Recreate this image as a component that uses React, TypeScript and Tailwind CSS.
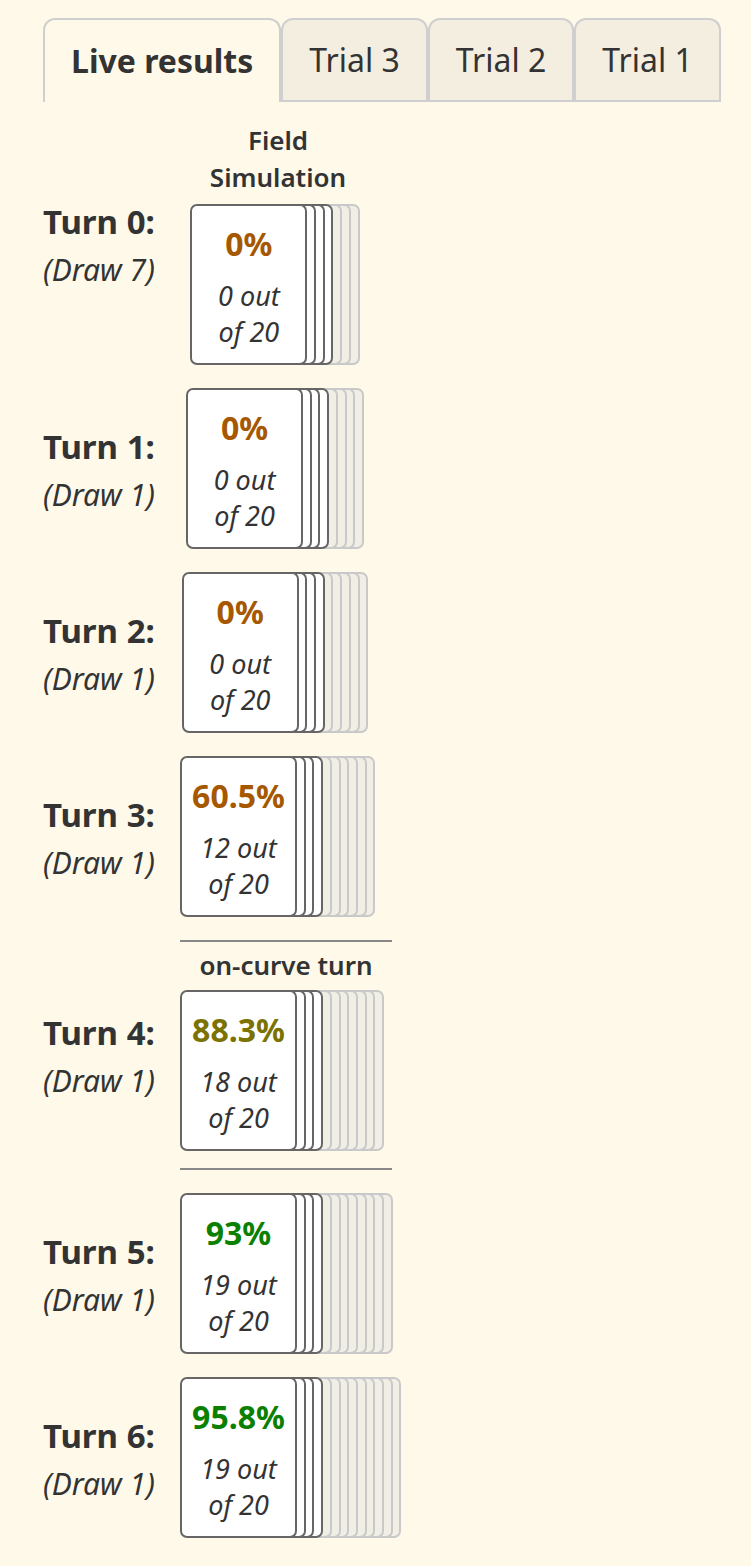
import React from "react";

type Row = {
  turn: number;
  draw: number;
  pct: string;
  hits: number;
  color: string;
  onCurve?: boolean;
};

const rows: Row[] = [
  { turn: 0, draw: 7, pct: "0%", hits: 0, color: "text-[#a65800]" },
  { turn: 1, draw: 1, pct: "0%", hits: 0, color: "text-[#a65800]" },
  { turn: 2, draw: 1, pct: "0%", hits: 0, color: "text-[#a65800]" },
  { turn: 3, draw: 1, pct: "60.5%", hits: 12, color: "text-[#a65800]" },
  { turn: 4, draw: 1, pct: "88.3%", hits: 18, color: "text-[#7b7200]", onCurve: true },
  { turn: 5, draw: 1, pct: "93%", hits: 19, color: "text-[#0b8000]" },
  { turn: 6, draw: 1, pct: "95.8%", hits: 19, color: "text-[#0b8000]" },
];

const CARD_W = 117;
const STEP = 8.7;
const DARK = 4;

function Stack({ row }: { row: Row }) {
  const count = 7 + row.turn;
  const width = CARD_W + (count - 1) * STEP;
  const ml = Math.max(0, (190 - width) / 2);
  const cards = Array.from({ length: count }, (_, i) => i);

  return (
    <div className="relative h-[161px]" style={{ width, marginLeft: ml }}>
      {cards.map((i) => (
        <div
          key={i}
          className={
            "absolute top-0 h-[161px] w-[117px] rounded-[7px] border-2 " +
            (i < DARK ? "border-[#666] bg-white" : "border-[#c9c9c9] bg-[#f1eee6]")
          }
          style={{ left: i * STEP, zIndex: count - i }}
        >
          {i === 0 && (
            <div className="flex flex-col items-center pt-[20px] text-center">
              <div className={"whitespace-nowrap text-[32px] font-bold leading-[36px] " + row.color}>
                {row.pct}
              </div>
              <div className="mt-[16px] text-[27px] italic leading-[36px] text-[#333]">
                {row.hits} out
                <br />
                of 20
              </div>
            </div>
          )}
        </div>
      ))}
    </div>
  );
}

function Label({ row }: { row: Row }) {
  return (
    <div className="w-[137px] shrink-0 whitespace-nowrap pt-[4px] text-[#333]">
      <div className="text-[33px] font-bold leading-[48px]">Turn {row.turn}:</div>
      <div className="text-[30px] italic leading-[48px]">(Draw {row.draw})</div>
    </div>
  );
}

export default function App() {
  const tabs = ["Trial 3", "Trial 2", "Trial 1"];

  return (
    <div
      className="min-h-[1566px] bg-[#fff9e9] pl-[43px] pt-[18px] text-[#333]"
      style={{ fontFamily: '"Noto Sans", "Open Sans", sans-serif' }}
    >
      <div className="flex h-[84px] items-stretch">
        <div className="flex items-center rounded-t-[12px] border-2 border-b-0 border-[#cfcfcf] bg-[#fff9e9] px-[26px] text-[32px] font-bold">
          Live results
        </div>
        {tabs.map((t) => (
          <div
            key={t}
            className="flex items-center rounded-t-[12px] border-2 border-[#cfcfcf] bg-[#f3eee0] px-[26px] text-[32px]"
          >
            {t}
          </div>
        ))}
      </div>

      <div className="flex flex-col gap-[23px] pt-[20px]">
        {rows.map((row) => (
          <div key={row.turn} className="flex items-center">
            <Label row={row} />
            <div className="w-[212px]">
              {row.turn === 0 && (
                <div className="mb-[8px] w-[196px] text-center text-[26px] font-semibold leading-[37px]">
                  Field
                  <br />
                  Simulation
                </div>
              )}
              {row.onCurve && (
                <>
                  <div className="h-[2px] bg-[#888]" />
                  <div className="mb-[10px] mt-[8px] text-center text-[26px] font-semibold leading-[30px]">
                    on-curve turn
                  </div>
                </>
              )}
              <Stack row={row} />
              {row.onCurve && <div className="mt-[17px] h-[2px] bg-[#888]" />}
            </div>
          </div>
        ))}
      </div>
    </div>
  );
}
